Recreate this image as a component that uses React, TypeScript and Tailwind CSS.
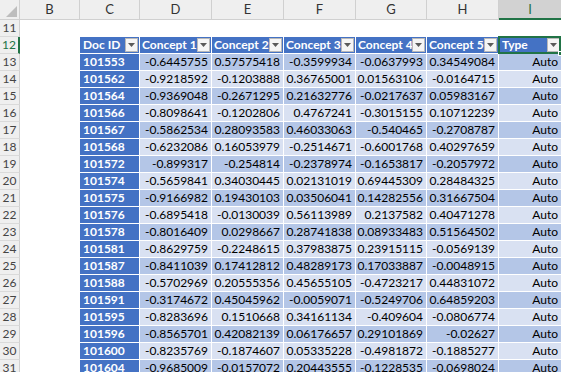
import React from "react";

type DataRow = [string, string, string, string, string, string];

const data: DataRow[] = [
  ["101553", "-0.6445755", "0.57575418", "-0.3599934", "-0.0637993", "0.34549084"],
  ["101562", "-0.9218592", "-0.1203888", "0.36765001", "0.01563106", "-0.0164715"],
  ["101564", "-0.9369048", "-0.2671295", "0.21632776", "-0.0217637", "0.05983167"],
  ["101566", "-0.8098641", "-0.1202806", "0.4767241", "-0.3015155", "0.10712239"],
  ["101567", "-0.5862534", "0.28093583", "0.46033063", "-0.540465", "-0.2708787"],
  ["101568", "-0.6232086", "0.16053979", "-0.2514671", "-0.6001768", "0.40297659"],
  ["101572", "-0.899317", "-0.254814", "-0.2378974", "-0.1653817", "-0.2057972"],
  ["101574", "-0.5659841", "0.34030445", "0.02131019", "0.69445309", "0.28484325"],
  ["101575", "-0.9166982", "0.19430103", "0.03506041", "0.14282556", "0.31667504"],
  ["101576", "-0.6895418", "-0.0130039", "0.56113989", "0.2137582", "0.40471278"],
  ["101578", "-0.8016409", "0.0298667", "0.28741838", "0.08933483", "0.51564502"],
  ["101581", "-0.8629759", "-0.2248615", "0.37983875", "0.23915115", "-0.0569139"],
  ["101587", "-0.8411039", "0.17412812", "0.48289173", "0.17033887", "-0.0048915"],
  ["101588", "-0.5702969", "0.20555356", "0.45655105", "-0.4723217", "0.44831072"],
  ["101591", "-0.3174672", "0.45045962", "-0.0059071", "-0.5249706", "0.64859203"],
  ["101595", "-0.8283696", "0.1510668", "0.34161134", "-0.409604", "-0.0806774"],
  ["101596", "-0.8565701", "0.42082139", "0.06176657", "0.29101869", "-0.02627"],
  ["101600", "-0.8235769", "-0.1874607", "0.05335228", "-0.4981872", "-0.1885277"],
  ["101604", "-0.9685009", "-0.0157072", "0.20443555", "-0.1228535", "-0.0698024"],
];

// widths for C..H (B and I handled separately)
const numW = ["w-[72px]", "w-[72px]", "w-[72px]", "w-[71px]", "w-[72px]"];
const headers = ["Concept 1", "Concept 2", "Concept 3", "Concept 4", "Concept 5"];

function FilterButton() {
  return (
    <span className="absolute right-[1px] top-[1px] flex h-[14px] w-[13px] items-center justify-center border border-[#b8b8b8] bg-[#f5f5f5]">
      <svg width="7" height="4" viewBox="0 0 7 4">
        <path d="M0 0h7L3.5 4z" fill="#5a5a5a" />
      </svg>
    </span>
  );
}

function RowHead({ n, active }: { n: number; active?: boolean }) {
  return (
    <div
      className={`flex w-[20px] shrink-0 items-center justify-center border-b border-[#dadada] bg-[#efefef] text-[12px] ${
        active ? "border-r-2 border-r-[#217346] text-[#217346]" : "border-r border-r-[#d0d0d0] text-[#444]"
      }`}
    >
      {n}
    </div>
  );
}

export default function App() {
  return (
    <div className="h-[376px] w-[571px] overflow-hidden bg-white font-['Lato',sans-serif] text-[12px] leading-none text-black">
      <div className="h-[372px] w-[561px] overflow-hidden">
        {/* column letters */}
        <div className="flex h-[20px]">
          <div className="relative w-[20px] shrink-0 border-r border-b border-[#d0d0d0] bg-[#efefef]">
            <svg className="absolute bottom-[2px] right-[2px]" width="11" height="11" viewBox="0 0 11 11">
              <path d="M11 0v11H0z" fill="#bdbdbd" />
            </svg>
          </div>
          <div className="flex w-[60px] shrink-0 items-center justify-center border-r border-b border-[#d0d0d0] bg-[#efefef] text-[13px] text-[#333]">B</div>
          <div className="flex w-[60px] shrink-0 items-center justify-center border-r border-b border-[#d0d0d0] bg-[#efefef] text-[13px] text-[#333]">C</div>
          {["D", "E", "F", "G", "H"].map((l, i) => (
            <div key={l} className={`flex ${numW[i]} shrink-0 items-center justify-center border-r border-b border-[#d0d0d0] bg-[#efefef] text-[13px] text-[#333]`}>
              {l}
            </div>
          ))}
          <div className="flex w-[62px] shrink-0 items-center justify-center border-b-2 border-[#217346] bg-[#d2d2d2] text-[13px] text-[#217346]">I</div>
        </div>

        {/* row 11 */}
        <div className="flex h-[17px]">
          <RowHead n={11} />
        </div>

        {/* row 12: table header */}
        <div className="flex h-[17px]">
          <RowHead n={12} active />
          <div className="w-[60px] shrink-0" />
          <div className="relative flex w-[60px] shrink-0 items-center border-r border-b border-white bg-[#4472c4] pl-[3px] font-bold text-white">
            Doc ID
            <FilterButton />
          </div>
          {headers.map((h, i) => (
            <div key={h} className={`relative flex ${numW[i]} shrink-0 items-center overflow-hidden whitespace-nowrap border-r border-b border-white bg-[#4472c4] pl-[2px] font-bold text-white`}>
              {h}
              <FilterButton />
            </div>
          ))}
          <div className="relative flex w-[62px] shrink-0 items-center border-b border-white bg-[#4472c4] pl-[3px] font-bold text-white">
            Type
            <FilterButton />
            <span className="pointer-events-none absolute -top-[1px] -bottom-[1px] -left-[1px] right-0 border-2 border-[#217346]" />
            <span className="absolute -bottom-[3px] right-[-2px] h-[5px] w-[5px] border border-white bg-[#217346]" />
          </div>
        </div>

        {/* data rows */}
        {data.map((r, ri) => {
          const band = ri % 2 === 0 ? "bg-[#b4c6e7]" : "bg-[#d9e1f2]";
          return (
            <div key={r[0]} className="flex h-[17px]">
              <RowHead n={13 + ri} />
              <div className="w-[60px] shrink-0" />
              <div className="flex w-[60px] shrink-0 items-center border-r border-b border-white bg-[#4472c4] pl-[3px] font-bold text-white">
                {r[0]}
              </div>
              {r.slice(1).map((v, ci) => (
                <div key={ci} className={`flex ${numW[ci]} shrink-0 items-center justify-end border-r border-b border-white ${band} pr-[3px]`}>
                  {v}
                </div>
              ))}
              <div className={`flex w-[62px] shrink-0 items-center justify-end border-b border-white ${band} pr-[3px]`}>Auto</div>
            </div>
          );
        })}
      </div>
    </div>
  );
}
